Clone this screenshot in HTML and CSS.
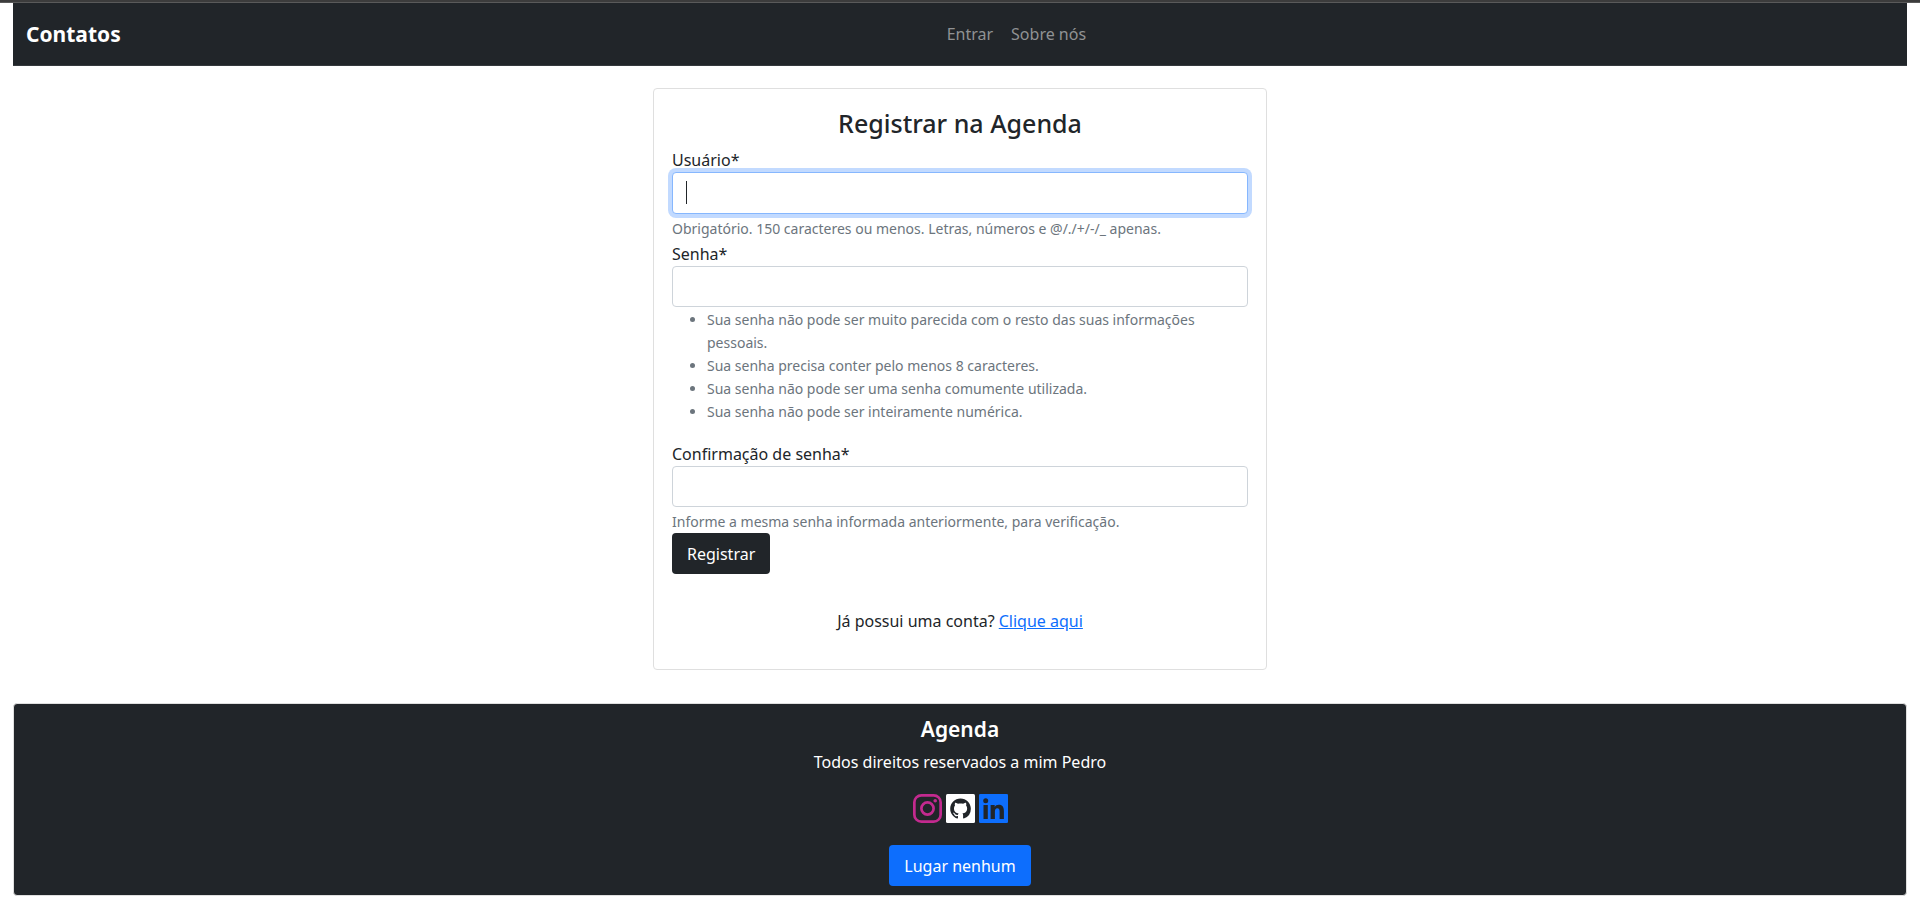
FILE: index.html
```html
<!DOCTYPE html>
<html lang="pt-BR">
<head>
<meta charset="utf-8">
<meta name="viewport" content="width=device-width, initial-scale=1">
<title>Contatos</title>
<link rel="stylesheet" href="styles.css">
</head>
<body>
<div class="container">
  <nav class="navbar">
    <a class="brand" href="#">Contatos</a>
    <div class="nav-links">
      <a class="nav-link" href="#">Entrar</a>
      <a class="nav-link" href="#">Sobre nós</a>
    </div>
  </nav>

  <main class="card">
    <h1 class="card-title">Registrar na Agenda</h1>
    <form class="form">
      <div class="field">
        <label class="label" for="usuario">Usuário*</label>
        <div class="input-wrap">
          <input class="input input-active" id="usuario" type="text" aria-describedby="usuario-help" autofocus>
          <span class="caret" aria-hidden="true"></span>
        </div>
        <small class="help" id="usuario-help">Obrigatório. 150 caracteres ou menos. Letras, números e @/./+/-/_ apenas.</small>
      </div>
      <div class="field">
        <label class="label" for="senha">Senha*</label>
        <input class="input" id="senha" type="password" aria-describedby="senha-help">
        <ul class="rules" id="senha-help">
          <li>Sua senha não pode ser muito parecida com o resto das suas informações pessoais.</li>
          <li>Sua senha precisa conter pelo menos 8 caracteres.</li>
          <li>Sua senha não pode ser uma senha comumente utilizada.</li>
          <li>Sua senha não pode ser inteiramente numérica.</li>
        </ul>
      </div>
      <div class="field">
        <label class="label" for="confirmacao">Confirmação de senha*</label>
        <input class="input" id="confirmacao" type="password" aria-describedby="confirmacao-help">
        <small class="help" id="confirmacao-help">Informe a mesma senha informada anteriormente, para verificação.</small>
      </div>
      <button class="btn btn-dark" type="submit">Registrar</button>
    </form>
    <p class="login">Já possui uma conta? <a class="link" href="#">Clique aqui</a></p>
  </main>

  <footer class="footer">
    <h2 class="footer-title">Agenda</h2>
    <p class="footer-text">Todos direitos reservados a mim Pedro</p>
    <div class="social">
      <a class="social-link instagram" href="#" aria-label="Instagram">
        <svg class="icon" viewBox="0 0 29 29" fill="none" stroke="currentColor" stroke-width="2.7">
          <rect x="1.35" y="1.35" width="26.3" height="26.3" rx="7"/>
          <circle cx="14.5" cy="14.5" r="6.1"/>
          <circle cx="22.2" cy="6.8" r="1.8" fill="currentColor" stroke="none"/>
        </svg>
      </a>
      <a class="social-link github" href="#" aria-label="GitHub">
        <svg class="icon" viewBox="0 0 29 29">
          <rect width="29" height="29" rx="1.5" fill="currentColor"/>
          <path class="cut" transform="translate(4.2 4.4) scale(1.29)" d="M8 0C3.58 0 0 3.58 0 8c0 3.54 2.29 6.53 5.47 7.59.4.07.55-.17.55-.38 0-.19-.01-.82-.01-1.49-2.01.37-2.53-.49-2.69-.94-.09-.23-.48-.94-.82-1.13-.28-.15-.68-.52-.01-.53.63-.01 1.08.58 1.23.82.72 1.21 1.87.87 2.33.66.07-.52.28-.87.51-1.07-1.78-.2-3.64-.89-3.64-3.95 0-.87.31-1.59.82-2.15-.08-.2-.36-1.02.08-2.12 0 0 .67-.21 2.2.82.64-.18 1.32-.27 2-.27s1.36.09 2 .27c1.53-1.04 2.2-.82 2.2-.82.44 1.1.16 1.92.08 2.12.51.56.82 1.27.82 2.15 0 3.07-1.87 3.75-3.65 3.95.29.25.54.73.54 1.48 0 1.07-.01 1.93-.01 2.2 0 .21.15.46.55.38A8.01 8.01 0 0 0 16 8c0-4.42-3.58-8-8-8z"/>
        </svg>
      </a>
      <a class="social-link linkedin" href="#" aria-label="LinkedIn">
        <svg class="icon" viewBox="0 0 29 29">
          <rect width="29" height="29" rx="1.3" fill="currentColor"/>
          <circle class="cut" cx="6.7" cy="6.7" r="2.5"/>
          <path class="cut" d="M4.5 11h4.3v14H4.5zM11.6 11h4.1v1.9c.8-1.4 2.2-2.2 4-2.2 4 0 5.2 2.5 5.2 6.3v8h-4.3v-7.2c0-2-.4-3.5-2.3-3.5-1.8 0-2.4 1.3-2.4 3.4V25h-4.3z"/>
        </svg>
      </a>
    </div>
    <a class="btn btn-primary" href="#">Lugar nenhum</a>
  </footer>
</div>
</body>
</html>
```
FILE: styles.css
```css
*, *::before, *::after { box-sizing: border-box; }

body {
  margin: 0;
  border-top: 2px solid #3c3c3c;
  background: #fff;
  color: #212529;
  font: 16px/26px "Noto Sans", "Open Sans", sans-serif;
}

.container {
  padding: 0 13px 6px;
  border-top: 1px solid #5a5a5a;
}

.navbar {
  display: flex;
  align-items: center;
  padding: 18px 13px;
  border-bottom: 1px solid #35393d;
  background: #212529;
}

.brand {
  margin-right: 18px;
  color: #fff;
  font-size: 21px;
  font-weight: 700;
  text-decoration: none;
}

.nav-links { display: flex; margin: 0 auto; }

.nav-link {
  padding: 0 9px;
  color: #909294;
  text-decoration: none;
}

.card {
  max-width: 614px;
  margin: 22px auto 33px;
  padding: 18px;
  border: 1px solid #dfdfdf;
  border-radius: 4px;
}

.card-title {
  margin: 0 0 9px;
  font-size: 25px;
  font-weight: 500;
  line-height: 32px;
  text-align: center;
}

.form { display: flex; flex-direction: column; align-items: flex-start; }

.field { width: 100%; margin-bottom: 2px; }
.field:last-of-type { margin-bottom: 0; }

.label { display: block; line-height: 24px; }

.input-wrap { position: relative; }

.input {
  display: block;
  width: 100%;
  height: 41px;
  padding: 7px 13px;
  border: 1px solid #ced4da;
  border-radius: 4px;
  outline: 0;
  background: #fff;
  color: inherit;
  font: inherit;
  caret-color: transparent;
}

.input-active {
  height: 42px;
  border-color: #86b7fe;
  box-shadow: 0 0 0 4px #c2daff;
}

.caret {
  position: absolute;
  top: 9px;
  left: 14px;
  width: 1px;
  height: 23px;
  background: #212529;
}

.help, .rules { color: #6c757d; font-size: 14px; line-height: 23px; }
.help { display: block; margin-top: 3px; }
.rules { margin: 1px 0 17px; padding-left: 35px; }

.btn {
  display: inline-block;
  padding: 8px 15px 7px;
  border: 0;
  border-radius: 4px;
  color: #fff;
  font: inherit;
  text-decoration: none;
}

.btn-dark { background: #212529; }
.btn-primary { background: #0d6efd; }

.login { margin: 34px 0 17px; text-align: center; }
.link { color: #0d6efd; }

.footer {
  display: flex;
  flex-direction: column;
  align-items: center;
  padding: 12px 18px 9px;
  border: 1px solid #dfdfdf;
  border-radius: 4px;
  background: #212529;
  color: #fff;
}

.footer-title { margin: 0 0 7px; font-size: 21px; font-weight: 600; }
.footer-text { margin: 0 0 19px; }

.social { display: flex; gap: 4px; margin-bottom: 22px; }
.social-link { display: flex; }
.icon { width: 29px; height: 29px; }
.cut { fill: #212529; }
.instagram { color: #c32a8f; }
.github { color: #fff; }
.linkedin { color: #0d6efd; }
```
